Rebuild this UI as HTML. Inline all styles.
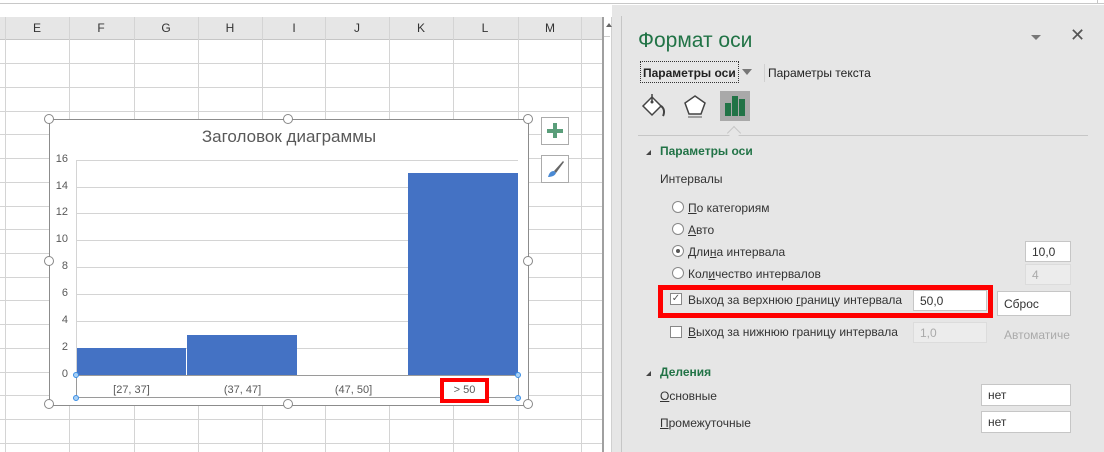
<!DOCTYPE html><html><head><meta charset="utf-8"><style>
*{margin:0;padding:0;box-sizing:border-box}
body{width:1104px;height:452px;overflow:hidden;background:#fff;font-family:"Liberation Sans","DejaVu Sans",sans-serif;position:relative;font-size:12px;color:#333}
.a{position:absolute}
.hl{position:absolute;height:1px;background:#d4d4d4}
.vl{position:absolute;width:1px;background:#d4d4d4}
.ch{position:absolute;top:17px;height:23px;line-height:23px;text-align:center;width:64px;font-size:12px;color:#333}
.t{position:absolute;white-space:nowrap;font-size:12px;color:#333}
.rad{position:absolute;width:12px;height:12px;border:1px solid #888;border-radius:50%;background:#fff}
.box{position:absolute;background:#fff;border:1px solid #c6c6c6;font-size:12px;padding-left:6px;line-height:20px}
.h{position:absolute;width:10px;height:10px;border:1.5px solid #888;border-radius:50%;background:#fff}
.bh{position:absolute;width:6px;height:6px;border:1px solid #3a8ee6;border-radius:50%;background:#a8d0f5}
u{text-decoration:underline}
</style></head><body>
<div class="a" style="left:0;top:0;width:1104px;height:4px;background:#fff;border-bottom:1px solid #c8c8c8"></div>
<div class="a" style="left:0;top:17px;width:603px;height:23px;background:#e6e6e6;border-bottom:1px solid #c6c6c6"></div>
<div class="ch" style="left:5px">E</div><div class="ch" style="left:69px">F</div><div class="ch" style="left:134px">G</div><div class="ch" style="left:198px">H</div><div class="ch" style="left:262px">I</div><div class="ch" style="left:325px">J</div><div class="ch" style="left:389px">K</div><div class="ch" style="left:453px">L</div><div class="ch" style="left:518px">M</div>
<div class="vl" style="left:5px;top:17px;height:435px"></div><div class="vl" style="left:69px;top:17px;height:435px"></div><div class="vl" style="left:134px;top:17px;height:435px"></div><div class="vl" style="left:198px;top:17px;height:435px"></div><div class="vl" style="left:262px;top:17px;height:435px"></div><div class="vl" style="left:325px;top:17px;height:435px"></div><div class="vl" style="left:389px;top:17px;height:435px"></div><div class="vl" style="left:453px;top:17px;height:435px"></div><div class="vl" style="left:518px;top:17px;height:435px"></div><div class="vl" style="left:581px;top:17px;height:435px"></div>
<div class="hl" style="left:0;top:63px;width:602px"></div><div class="hl" style="left:0;top:87px;width:602px"></div><div class="hl" style="left:0;top:111px;width:602px"></div><div class="hl" style="left:0;top:134px;width:602px"></div><div class="hl" style="left:0;top:158px;width:602px"></div><div class="hl" style="left:0;top:182px;width:602px"></div><div class="hl" style="left:0;top:206px;width:602px"></div><div class="hl" style="left:0;top:229px;width:602px"></div><div class="hl" style="left:0;top:253px;width:602px"></div><div class="hl" style="left:0;top:277px;width:602px"></div><div class="hl" style="left:0;top:300px;width:602px"></div><div class="hl" style="left:0;top:324px;width:602px"></div><div class="hl" style="left:0;top:348px;width:602px"></div><div class="hl" style="left:0;top:372px;width:602px"></div><div class="hl" style="left:0;top:395px;width:602px"></div><div class="hl" style="left:0;top:419px;width:602px"></div><div class="hl" style="left:0;top:443px;width:602px"></div>
<div class="a" style="left:602px;top:17px;width:10px;height:435px;background:#fff;border-left:2px solid #a0a0a0;border-right:1px solid #d0d0d0"></div>
<div class="a" style="left:606px;top:23px;width:0;height:0;border:3px solid transparent;border-bottom:4px solid #666;border-top:0"></div>
<div class="a" style="left:604px;top:36px;width:6px;height:1px;background:#ccc"></div>
<div class="a" style="left:49px;top:119px;width:480px;height:287px;background:#fff;border:1.5px solid #8c8c8c"></div>
<div class="t" style="left:49px;top:127px;width:480px;text-align:center;font-size:17px;color:#595959">Заголовок диаграммы</div>
<div class="hl" style="left:76px;top:160px;width:442px"></div><div class="hl" style="left:76px;top:187px;width:442px"></div><div class="hl" style="left:76px;top:213px;width:442px"></div><div class="hl" style="left:76px;top:240px;width:442px"></div><div class="hl" style="left:76px;top:267px;width:442px"></div><div class="hl" style="left:76px;top:294px;width:442px"></div><div class="hl" style="left:76px;top:321px;width:442px"></div><div class="hl" style="left:76px;top:348px;width:442px"></div>
<div class="vl" style="left:76px;top:160px;height:215px"></div>
<div class="t" style="left:54px;top:153px;width:14px;text-align:right;font-size:11px;color:#595959">16</div><div class="t" style="left:54px;top:180px;width:14px;text-align:right;font-size:11px;color:#595959">14</div><div class="t" style="left:54px;top:206px;width:14px;text-align:right;font-size:11px;color:#595959">12</div><div class="t" style="left:54px;top:233px;width:14px;text-align:right;font-size:11px;color:#595959">10</div><div class="t" style="left:54px;top:260px;width:14px;text-align:right;font-size:11px;color:#595959">8</div><div class="t" style="left:54px;top:287px;width:14px;text-align:right;font-size:11px;color:#595959">6</div><div class="t" style="left:54px;top:314px;width:14px;text-align:right;font-size:11px;color:#595959">4</div><div class="t" style="left:54px;top:341px;width:14px;text-align:right;font-size:11px;color:#595959">2</div><div class="t" style="left:54px;top:368px;width:14px;text-align:right;font-size:11px;color:#595959">0</div>
<div class="a" style="left:77px;top:348px;width:109px;height:27px;background:#4472c4"></div>
<div class="a" style="left:187px;top:335px;width:110px;height:40px;background:#4472c4"></div>
<div class="a" style="left:408px;top:173px;width:110px;height:202px;background:#4472c4"></div>
<div class="a" style="left:76px;top:375px;width:443px;height:23px;border:1px solid #9a9a9a"></div>
<div class="t" style="left:76px;top:384px;width:111px;text-align:center;font-size:11px;color:#595959">[27, 37]</div>
<div class="t" style="left:187px;top:384px;width:111px;text-align:center;font-size:11px;color:#595959">(37, 47]</div>
<div class="t" style="left:298px;top:384px;width:111px;text-align:center;font-size:11px;color:#595959">(47, 50]</div>
<div class="a" style="left:440px;top:378px;width:49px;height:25px;border:4px solid #f00;background:#fff"></div>
<div class="t" style="left:440px;top:384px;width:49px;text-align:center;font-size:11px;color:#595959">&gt; 50</div>
<div class="bh" style="left:73px;top:372px"></div><div class="bh" style="left:515px;top:372px"></div><div class="bh" style="left:73px;top:395px"></div><div class="bh" style="left:515px;top:395px"></div>
<div class="h" style="left:44px;top:114px"></div><div class="h" style="left:283px;top:114px"></div><div class="h" style="left:523px;top:114px"></div>
<div class="h" style="left:44px;top:256px"></div><div class="h" style="left:523px;top:256px"></div>
<div class="h" style="left:44px;top:399px"></div><div class="h" style="left:283px;top:399px"></div><div class="h" style="left:523px;top:399px"></div>
<div class="a" style="left:541px;top:117px;width:28px;height:28px;border:1px solid #ababab;background:#fff"></div>
<div class="a" style="left:553px;top:123px;width:4px;height:15px;background:#5a9e7a"></div><div class="a" style="left:547px;top:129px;width:16px;height:4px;background:#5a9e7a"></div>
<div class="a" style="left:541px;top:155px;width:28px;height:28px;border:1px solid #ababab;background:#fff"></div>
<svg class="a" style="left:545px;top:159px" width="20" height="20"><path d="M18 2 L9 12 L11 14 L19 3Z" fill="#666"/><path d="M9 12 C5 12 4 15 3 18 C6 18 10 17 11 14Z" fill="#4a8ad4"/></svg>
<div class="a" style="left:612px;top:5px;width:492px;height:447px;background:#e6e6e6"></div>
<div class="a" style="left:621px;top:16px;width:1px;height:436px;background:#c6c6c6"></div>
<div class="a" style="left:1097px;top:0;width:1px;height:4px;background:#c6c6c6"></div>
<div class="t" style="left:638px;top:29px;font-size:21px;color:#217346">Формат оси</div>
<div class="a" style="left:1031px;top:35px;border:5px solid transparent;border-top:5px solid #777;border-bottom:0"></div>
<div class="t" style="left:1070px;top:25px;font-size:18px;color:#555">✕</div>
<div class="a" style="left:640px;top:61px;width:99px;height:22px;border:1px dotted #333"></div>
<div class="t" style="left:643px;top:66px;font-weight:bold;color:#222">Параметры оси</div>
<div class="a" style="left:742px;top:69px;border:5px solid transparent;border-top:6px solid #777;border-bottom:0"></div>
<div class="a" style="left:764px;top:64px;width:1px;height:18px;background:#d0d0d0"></div>
<div class="t" style="left:768px;top:66px;color:#222">Параметры текста</div>
<svg class="a" style="left:640px;top:92px" width="32" height="28"><path d="M3 14 L12 5 L21 14 L12 23Z" fill="#fff" stroke="#444" stroke-width="1.5"/><path d="M12 2 L12 10" stroke="#444" stroke-width="1.5"/><circle cx="12" cy="10" r="1.5" fill="#444"/><path d="M21 14 C24 16 25 20 23 24" stroke="#444" stroke-width="2" fill="none"/></svg>
<svg class="a" style="left:681px;top:92px" width="28" height="28"><path d="M14 4 L24 11 L20 22 L8 22 L4 11Z" fill="#fff" stroke="#444" stroke-width="1.5"/><path d="M7 25 L21 25" stroke="#888" stroke-width="1.5"/></svg>
<div class="a" style="left:720px;top:91px;width:30px;height:30px;background:#a9a9a9"></div>
<div class="a" style="left:725px;top:103px;width:6px;height:13px;background:#217346"></div><div class="a" style="left:732px;top:96px;width:6px;height:20px;background:#217346"></div><div class="a" style="left:739px;top:99px;width:6px;height:17px;background:#217346"></div>
<div class="a" style="left:638px;top:135px;width:450px;height:1px;background:#c6c6c6"></div>
<div class="a" style="left:729px;top:128px;width:10px;height:10px;background:#e6e6e6;border-left:1px solid #c6c6c6;border-top:1px solid #c6c6c6;transform:rotate(45deg)"></div>
<div class="a" style="left:646px;top:146px;border:4px solid transparent;border-right:0;border-bottom:5px solid #444;border-left:5px solid transparent"></div>
<div class="t" style="left:660px;top:144px;font-weight:bold;color:#217346">Параметры оси</div>
<div class="t" style="left:660px;top:172px">Интервалы</div>
<div class="rad" style="left:672px;top:201px"></div><div class="t" style="left:688px;top:201px"><u>П</u>о категориям</div>
<div class="rad" style="left:672px;top:223px"></div><div class="t" style="left:688px;top:223px"><u>А</u>вто</div>
<div class="rad" style="left:672px;top:245px"></div><div class="a" style="left:676px;top:249px;width:4px;height:4px;border-radius:50%;background:#555"></div><div class="t" style="left:688px;top:245px">Дли<u>н</u>а интервала</div>
<div class="box" style="left:1025px;top:241px;width:46px;height:21px">10,0</div>
<div class="rad" style="left:672px;top:267px"></div><div class="t" style="left:688px;top:267px">Кол<u>и</u>чество интервалов</div>
<div class="box" style="left:1025px;top:264px;width:46px;height:21px;background:#ececec;color:#aaa;border-color:#dcdcdc">4</div>
<div class="a" style="left:658px;top:285px;width:335px;height:33px;border:5px solid #f00"></div>
<div class="a" style="left:670px;top:293px;width:12px;height:12px;border:1px solid #888;background:#fff;font-size:10px;line-height:10px;text-align:center;color:#555">✓</div>
<div class="t" style="left:688px;top:293px">Выход за верхнюю <u>г</u>раницу интервала</div>
<div class="box" style="left:913px;top:290px;width:74px;height:21px">50,0</div>
<div class="box" style="left:997px;top:291px;width:74px;height:25px;line-height:24px">Сброс</div>
<div class="a" style="left:670px;top:326px;width:12px;height:12px;border:1px solid #888;background:#fff"></div>
<div class="t" style="left:688px;top:325px"><u>В</u>ыход за нижнюю границу интервала</div>
<div class="box" style="left:913px;top:322px;width:74px;height:21px;background:#ececec;color:#aaa;border-color:#dcdcdc">1,0</div>
<div class="t" style="left:1004px;top:328px;color:#aaa">Автоматиче</div>
<div class="a" style="left:646px;top:367px;border:4px solid transparent;border-right:0;border-bottom:5px solid #444;border-left:5px solid transparent"></div>
<div class="t" style="left:660px;top:365px;font-weight:bold;color:#217346">Деления</div>
<div class="t" style="left:660px;top:389px"><u>О</u>сновные</div>
<div class="box" style="left:981px;top:384px;width:90px;height:22px">нет</div>
<div class="t" style="left:660px;top:416px"><u>П</u>ромежуточные</div>
<div class="box" style="left:981px;top:411px;width:90px;height:22px">нет</div>
</body></html>
